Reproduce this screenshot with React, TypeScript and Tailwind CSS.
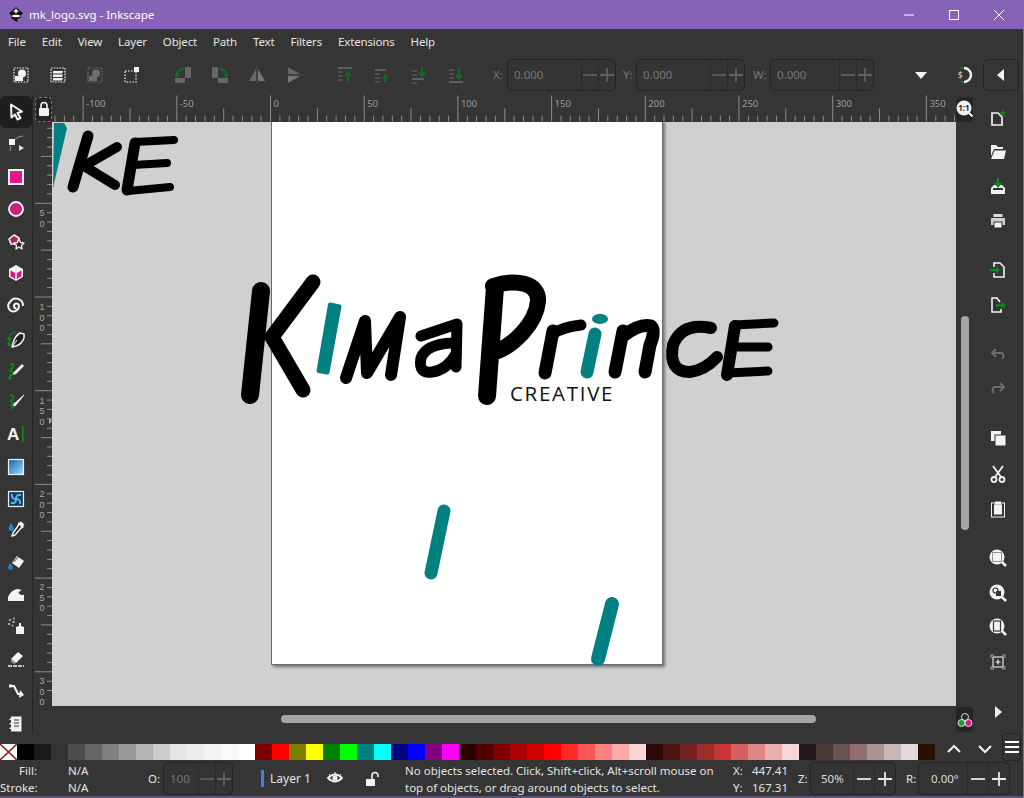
import React from "react";

const W = "#f2f2f2";
const D = "#6e6e6e";
const G = "#0f8a1c";

function Ic({ s = 20, children }: { s?: number; children: React.ReactNode }) {
  return (
    <svg width={s} height={s} viewBox="0 0 20 20" fill="none" className="block shrink-0">
      {children}
    </svg>
  );
}

const leftIcons: { y: number; el: React.ReactNode }[] = [
  { y: 32, el: <Ic><path d="M5 2.5 L16 9.5 L11.5 11 L14.5 16 L11.5 17.5 L9 12.5 L5.5 15.5 Z" fill="#222" stroke={W} strokeWidth="2" strokeLinejoin="round" /></Ic> },
  { y: 32, el: <Ic><rect x="3" y="5" width="6" height="6" fill={W} /><path d="M9 5 Q13 2 17 2" stroke="#999" strokeWidth="1" /><path d="M5 12 L4 17" stroke="#999" strokeWidth="1" /><path d="M13 11 L18 14 L13 17 Z" fill="#ddd" /></Ic> },
  { y: 33, el: <Ic><rect x="3" y="3" width="14" height="14" fill="#f0148c" stroke={W} strokeWidth="2" /></Ic> },
  { y: 32, el: <Ic><circle cx="10" cy="10" r="7" fill="#c6217e" stroke={W} strokeWidth="1.8" /></Ic> },
  { y: 32, el: <Ic><path d="M3 8 L8 4 L13 7 L11 13 L5 13 Z" fill="#b01f70" stroke={W} strokeWidth="1.6" strokeLinejoin="round" /><path d="M13 8 L14.5 11.5 L18 12 L15.5 14.5 L16 18 L13 16 L10 18 L10.5 14.5 L8 12 L11.5 11.5 Z" fill="#35202c" stroke={W} strokeWidth="1.3" strokeLinejoin="round" /></Ic> },
  { y: 32, el: <Ic><path d="M10 2 L17 6 L17 14 L10 18 L3 14 L3 6 Z" fill={W} /><path d="M4.5 7.5 L9.2 10 L9.2 16 L4.5 13.3 Z" fill="#d81b84" /><path d="M15.5 7.5 L10.8 10 L10.8 16 L15.5 13.3 Z" fill="#d81b84" /></Ic> },
  { y: 33, el: <Ic><path d="M10.5 12.5 A2.5 2.5 0 1 1 13 10 A5.5 5.5 0 0 1 7 15.5 A5.5 5.5 0 0 1 4 6 A7 7 0 0 1 17 10" stroke={W} strokeWidth="2" /></Ic> },
  { y: 33, el: <Ic><path d="M3 9 Q4 4 10 3" stroke={G} strokeWidth="1.2" /><rect x="1.5" y="8" width="3" height="3" fill={G} /><rect x="1.5" y="14" width="3" height="3" fill={G} /><path d="M3 11 V14" stroke={G} /><path d="M18 5 L14 4 Q9 7 7 14 L6 18 L10 17 Q16 15 18 9 Z" fill="#222" stroke={W} strokeWidth="1.5" strokeLinejoin="round" /><path d="M6.5 17.5 L11 11" stroke={W} strokeWidth="1" /></Ic> },
  { y: 31, el: <Ic><path d="M4 3 Q10 3 6 7 Q2 10 7 11 Q9 12 5 14 L3 17" stroke={G} strokeWidth="1.8" /><path d="M16 3 L18 5 L10 13 L7 14 L8 11 Z" fill={W} /><circle cx="4" cy="17" r="1.6" fill={G} /></Ic> },
  { y: 32, el: <Ic><path d="M4 3 Q10 4 6 8 Q3 10 8 11 L4 14" stroke={G} strokeWidth="1.6" /><path d="M18 3 L7 13 L9 14 Z" fill={W} stroke={W} /><path d="M7 13 L3 18 L9 15 Z" fill={G} /></Ic> },
  { y: 32, el: <Ic><text x="1" y="16" fontSize="17" fontWeight="700" fill={W} fontFamily="'Liberation Sans',sans-serif">A</text><rect x="16" y="2" width="1.6" height="16" fill={G} /></Ic> },
  { y: 33, el: <Ic><defs><linearGradient id="gr" x1="0" y1="0" x2="1" y2="1"><stop offset="0" stopColor="#0b63b5" /><stop offset="1" stopColor="#a9dcfb" /></linearGradient></defs><rect x="2.5" y="2.5" width="15" height="15" fill="url(#gr)" stroke={W} strokeWidth="1.2" /></Ic> },
  { y: 31, el: <Ic><rect x="2.5" y="2.5" width="15" height="15" fill="#14405f" stroke={W} strokeWidth="1.2" /><path d="M10 10 Q5 10 6 5 M10 10 Q15 10 14 15 M10 10 Q10 15 5 14 M10 10 Q10 5 15 6" stroke="#56c0f5" strokeWidth="1.8" /></Ic> },
  { y: 32, el: <Ic><path d="M13 3 L17 7 L15 8 L9 15 L6 16 L7 13 L12 6 Z" fill="#222" stroke={W} strokeWidth="1.5" strokeLinejoin="round" /><rect x="13" y="2" width="5" height="4" fill={W} transform="rotate(45 15 4)" /><path d="M5 3 Q8 7 8 9 A2.8 2.8 0 0 1 2.5 9 Q2.5 7 5 3 Z" fill="#1e88d8" /></Ic> },
  { y: 33, el: <Ic><path d="M11 3 L18 8 L13 15 L6 10 Z" fill={W} /><path d="M8 9 L12 4" stroke="#444" /><path d="M4 10 Q7 14 7 15 A2.7 2.7 0 0 1 2 15 Q2 13 4 10 Z" fill="#1e88d8" /></Ic> },
  { y: 31, el: <Ic><path d="M2 16 V12 Q5 5 11 4 Q15 3.5 15 6 Q13 6 12.5 8 Q15 11 18 9.5 V16 Z" fill={W} /></Ic> },
  { y: 32, el: <Ic><path d="M10 11 L13 10 V7 H15 V10 L18 11 V18 H10 Z" fill={W} /><circle cx="4" cy="4" r="1.1" fill="#cccccc" /><circle cx="7.5" cy="6" r="1.1" fill="#cccccc" /><circle cx="3" cy="8" r="1.1" fill="#cccccc" /><circle cx="8" cy="2.5" r="1.1" fill="#aaaaaa" /><circle cx="6.5" cy="9.5" r="1.1" fill="#aaaaaa" /></Ic> },
  { y: 33, el: <Ic><path d="M5 10 L12 3 L17 7 L10 14 Z" fill={W} /><path d="M5 10 L10 14 L8 15 L5 13 Z" fill="#999" /><path d="M2 17 H18" stroke={W} strokeWidth="1.3" strokeDasharray="4 1" /></Ic> },
  { y: 32, el: <Ic><path d="M4 5 H8 L12 13 H15" stroke={W} strokeWidth="2.2" /><path d="M14 9 L18 14 L13 17 Z" fill={W} /><rect x="3" y="3.5" width="3" height="3" fill={W} /></Ic> },
  { y: 33, el: <Ic><path d="M5 2.5 H15.5 V17.5 H5 V15 H3.5 V13.5 H5 V10.5 H3.5 V9 H5 V6 H3.5 V4.5 H5 Z" fill={W} /><path d="M8 6 H13 M8 9 H13 M8 12 H13" stroke="#333" strokeWidth="1.2" /></Ic> },
];

function Sel({ children, c = W }: { children?: React.ReactNode; c?: string }) {
  return (
    <Ic>
      <rect x="3" y="3" width="14" height="14" stroke={c} strokeWidth="1.2" strokeDasharray="1.6 1.2" />
      {children}
    </Ic>
  );
}

const topIcons: React.ReactNode[][] = [
  [
    <Sel><circle cx="11" cy="8.5" r="4" fill={W} /><rect x="4" y="11" width="8" height="5" fill={W} /></Sel>,
    <Sel><path d="M5 6 H15 L14 8.5 H5 Z M5 9.5 H15 L14 12 H5 Z M5 13 H15 L14 15.5 H5 Z" fill={W} /></Sel>,
    <Sel c={D}><circle cx="11" cy="8.5" r="4" fill={D} /><rect x="4" y="11" width="8" height="5" fill={D} /></Sel>,
    <Ic><rect x="3" y="6" width="11" height="11" stroke={W} strokeWidth="1.2" strokeDasharray="1.6 1.4" /><rect x="12" y="2" width="5" height="5" fill={W} /></Ic>,
  ],
  [
    <Ic><rect x="2" y="13" width="10" height="5" fill="#666" /><rect x="12" y="2" width="6" height="11" fill="#666" /><path d="M4 11 A6 6 0 0 1 11 4" stroke="#176b20" strokeWidth="2.2" /><path d="M1.5 9 L6.5 9 L4 13 Z" fill="#176b20" /></Ic>,
    <Ic><rect x="8" y="13" width="10" height="5" fill="#666" /><rect x="2" y="2" width="6" height="11" fill="#666" /><path d="M16 11 A6 6 0 0 0 9 4" stroke="#176b20" strokeWidth="2.2" /><path d="M18.5 9 L13.5 9 L16 13 Z" fill="#176b20" /></Ic>,
    <Ic><path d="M9 4 V16 H2 Z" fill="#666" /><path d="M11 4 V16 H18 Z" fill="#777" /><path d="M10 1 V19" stroke="#555" strokeDasharray="2 1" /></Ic>,
    <Ic><path d="M4 2 L16 9 H4 Z" fill="#666" /><path d="M4 11 H16 L4 18 Z" fill="#777" /><path d="M1 10 H19" stroke="#555" strokeDasharray="2 1" /></Ic>,
  ],
  [
    <Ic><path d="M3 3 H17" stroke="#6a6a6a" strokeWidth="1.6" /><path d="M3 7 H8 M3 11 H8 M3 15 H8" stroke="#5a5a5a" strokeWidth="1.6" /><path d="M13 18 V8 M10 11 L13 7 L16 11" stroke="#176b20" strokeWidth="1.8" /></Ic>,
    <Ic><path d="M3 5 H14" stroke="#6a6a6a" strokeWidth="1.6" /><path d="M3 9 H8 M3 13 H8 M3 17 H8" stroke="#5a5a5a" strokeWidth="1.6" /><path d="M13 18 V11 M10 14 L13 10 L16 14" stroke="#176b20" strokeWidth="1.8" /></Ic>,
    <Ic><path d="M3 14 H15" stroke="#6a6a6a" strokeWidth="1.6" /><path d="M3 6 H8 M3 10 H8 M3 18 H8" stroke="#5a5a5a" strokeWidth="1.6" /><path d="M13 2 V10 M10 7 L13 11 L16 7" stroke="#176b20" strokeWidth="1.8" /></Ic>,
    <Ic><path d="M3 17 H17" stroke="#6a6a6a" strokeWidth="1.6" /><path d="M3 5 H8 M3 9 H8 M3 13 H8" stroke="#5a5a5a" strokeWidth="1.6" /><path d="M13 2 V13 M10 10 L13 14 L16 10" stroke="#176b20" strokeWidth="1.8" /></Ic>,
  ],
];

function Mag({ children }: { children?: React.ReactNode }) {
  return (
    <Ic>
      <circle cx="9" cy="9" r="7.5" fill={W} />
      <path d="M14 14 L18 18" stroke={W} strokeWidth="2.5" />
      {children}
    </Ic>
  );
}

const rightIcons: { y: number; el: React.ReactNode }[] = [
  { y: 118, el: <Ic><path d="M4 5 H10 L14 9 V17 H4 Z" stroke={W} strokeWidth="1.7" fill="#333" /><path d="M15 1 L16 4 L19 5 L16 6 L15 9 L14 6 L11 5 L14 4 Z" fill={G} /></Ic> },
  { y: 152, el: <Ic><path d="M3 3 H8 L10 5 H15 V7 H6 L3 14 Z" fill={W} /><path d="M6.5 8.5 H18 L16 17 H3 Z" fill={W} /></Ic> },
  { y: 187, el: <Ic><path d="M3 11 L6 8 H14 L17 11 V17 H3 Z" fill={W} /><rect x="5" y="11" width="10" height="2" fill="#333" /><path d="M10 1 V9" stroke={G} strokeWidth="2.4" /><path d="M6 6 H14 L10 11 Z" fill={G} /></Ic> },
  { y: 221, el: <Ic><rect x="5.5" y="3" width="9" height="3" fill="#ddd" /><path d="M3 7 H17 V14 H3 Z" fill="#cfcfcf" /><rect x="6" y="11" width="8" height="6" fill={W} stroke="#333" /></Ic> },
  { y: 270, el: <Ic><path d="M6 7 V3 H12 L16 7 V17 H6 V13" stroke={W} strokeWidth="1.6" /><path d="M2 10 H9" stroke={G} strokeWidth="2.4" /><path d="M8 6.5 L12 10 L8 13.5 Z" fill={G} /></Ic> },
  { y: 305, el: <Ic><path d="M12 7 L9 3 H4 V17 H13 V14" stroke={W} strokeWidth="1.6" /><path d="M8 10.5 H15" stroke={G} strokeWidth="2.4" /><path d="M14 7 L18 10.5 L14 14 Z" fill={G} /></Ic> },
  { y: 355, el: <Ic><path d="M14 14 Q17 11 14 8 H6" stroke={D} strokeWidth="2" /><path d="M8 4 L4 8 L8 12" stroke={D} strokeWidth="2" /></Ic> },
  { y: 389, el: <Ic><path d="M6 14 Q3 11 6 8 H14" stroke={D} strokeWidth="2" /><path d="M12 4 L16 8 L12 12" stroke={D} strokeWidth="2" /></Ic> },
  { y: 438, el: <Ic><rect x="3" y="3" width="10" height="10" fill={W} /><rect x="7" y="7" width="11" height="11" fill={W} stroke="#333" /></Ic> },
  { y: 474, el: <Ic><path d="M5 2 L13 13 M15 2 L7 13" stroke={W} strokeWidth="1.8" /><circle cx="6" cy="15.5" r="2.5" stroke={W} strokeWidth="1.8" /><circle cx="14" cy="15.5" r="2.5" stroke={W} strokeWidth="1.8" /></Ic> },
  { y: 509, el: <Ic><rect x="3.5" y="4" width="13" height="14" stroke={W} strokeWidth="1" /><rect x="6" y="5.5" width="8" height="10" fill={W} /><rect x="7" y="2.5" width="6" height="3" fill={W} /></Ic> },
  { y: 558, el: <Mag><rect x="4.5" y="4.5" width="9" height="9" stroke="#333" strokeDasharray="1 1" /></Mag> },
  { y: 593, el: <Mag><circle cx="7.5" cy="7.5" r="2.5" stroke="#333" strokeWidth="1.2" /><rect x="8" y="8" width="5" height="5" fill="#333" /></Mag> },
  { y: 627, el: <Mag><rect x="5.5" y="4" width="7" height="10" fill={W} stroke="#333" strokeWidth="1.2" /></Mag> },
  { y: 662, el: <Ic><path d="M6 3 H3 V6 M14 3 H17 V6 M6 17 H3 V14 M14 17 H17 V14" stroke="#aaa" strokeWidth="1" /><rect x="5" y="5" width="10" height="10" stroke={W} strokeWidth="1.1" /><path d="M7.5 10 H12.5 M10 7.5 V12.5" stroke={W} strokeWidth="1.2" /></Ic> },
  { y: 712, el: <Ic><path d="M7 4 L14 10 L7 16 Z" fill={W} /></Ic> },
];

const swatches = [
  "#000000","#1a1a1a","#333333","#4d4d4d","#666666","#808080","#999999","#b3b3b3","#cccccc","#e6e6e6","#ececec","#f2f2f2","#f9f9f9","#ffffff",
  "#800000","#ff0000","#808000","#ffff00","#008000","#00ff00","#008080","#00ffff","#000080","#0000ff","#800080","#ff00ff",
  "#2b0000","#550000","#800000","#aa0000","#d40000","#ff0000","#ff2a2a","#ff5555","#ff8080","#ffaaaa","#ffd5d5",
  "#280b0b","#501616","#782121","#a02c2c","#c83737","#d35f5f","#de8787","#e9afaf","#f4d7d7",
  "#241c1c","#483737","#6c5353","#916f6f","#ac9393","#c8b7b7","#e3dbdb","#2b1100",
];

function Spin({ w, value, btn = 17, bright = false, text = 6 }: { w: string; value: string; btn?: number; bright?: boolean; text?: number }) {
  const c = bright ? "#e8e8e8" : "#5f5f5f";
  return (
    <div className={`${w} flex h-full shrink-0 items-stretch rounded-[5px] border border-[#242424] bg-[#343434]`}>
      <div
        className={`flex flex-1 items-center ${bright ? "text-[#dcdcdc]" : "text-[#777777]"}`}
        style={{ paddingLeft: text }}
      >
        {value}
      </div>
      {[0, 1].map((i) => (
        <div key={i} className="flex items-center justify-center border-l border-[#2a2a2a]" style={{ width: btn }}>
          <svg width="16" height="16" viewBox="0 0 16 16">
            <path d={i === 0 ? "M1 8 H15" : "M1 8 H15 M8 1 V15"} stroke={c} strokeWidth="1.8" />
          </svg>
        </div>
      ))}
    </div>
  );
}

function HRuler() {
  const ticks = [];
  for (let i = -23; i < 74; i++) {
    const x = 218.5 + i * 9.37;
    const m = ((i % 10) + 10) % 10;
    const h = m === 0 ? 26 : m === 5 ? 13 : 6;
    ticks.push(<path key={i} d={`M${x.toFixed(1)} 26.5 V${26.5 - h}`} stroke="#8c8c8c" strokeWidth="1" />);
  }
  const labels = [-100, -50, 0, 50, 100, 150, 200, 250, 300, 350];
  return (
    <svg width="904" height="27" className="block shrink-0">
      {ticks}
      {labels.map((l) => (
        <text key={l} x={218.5 + (l / 10) * 18.74 + 3} y="12" fontSize="9.5" fill="#9c9c9c" fontFamily="'Noto Sans',sans-serif">
          {l}
        </text>
      ))}
    </svg>
  );
}

function VRuler() {
  const ticks = [];
  for (let i = 0; i < 63; i++) {
    const y = -12.4 + i * 9.37;
    const m = i % 10;
    if (y < 0) continue;
    const x = m === 0 ? 2 : m === 5 ? 8 : 14;
    ticks.push(<path key={i} d={`M${x} ${y.toFixed(1)} H19`} stroke="#8c8c8c" strokeWidth="1" />);
  }
  const rows = [
    { y: 81, d: ["5", "0"] },
    { y: 175, d: ["1", "0", "0"] },
    { y: 268.5, d: ["1", "5", "0"] },
    { y: 362, d: ["2", "0", "0"] },
    { y: 455, d: ["2", "5", "0"] },
    { y: 549, d: ["3", "0", "0"] },
  ];
  return (
    <svg width="19" height="584" className="block shrink-0 overflow-visible">
      {ticks}
      {rows.map((r) =>
        r.d.map((c, i) => (
          <text key={r.y + "-" + i} x="6.5" y={r.y + 13 + i * 10.5} fontSize="9" fill="#a8a8a8" fontFamily="'Liberation Sans',sans-serif">
            {c}
          </text>
        )),
      )}
      <path d="M16 296 L19 299 L16 302 Z" fill="#aaaaaa" />
    </svg>
  );
}

function Logo() {
  const k = { stroke: "#000", fill: "none", strokeLinecap: "round" as const, strokeLinejoin: "round" as const };
  const teal = { ...k, stroke: "#008080" };
  return (
    <svg viewBox="52 122 904 584" width="904" height="584" className="absolute left-0 top-0">
      <polygon points="54,123 64,123 67,128 53,188" fill="#008080" />
      <g {...k}>
        <path d="M88 136 L73 187" strokeWidth="11" />
        <path d="M117 147 L84 166 L115 185" strokeWidth="10" />
        <path d="M135 143 L127 190" strokeWidth="11" />
        <path d="M135 142 L174 140 M133 165 L167 163 M128 191 L170 187" strokeWidth="8" />

        <path d="M261 291 L250 395" strokeWidth="18" />
        <path d="M313 282 L272 337" strokeWidth="15" />
        <path d="M272 337 L303 390" strokeWidth="15" />

        <path d="M346 378 L365 321 L367 373 L400 317 L391 375" strokeWidth="12" />
        <path d="M421 336 L457 324 L456 367" strokeWidth="11" />
        <path d="M453 343 Q426 344 421 358 Q418 374 432 372 Q447 370 456 354" strokeWidth="11" />

        <path d="M495 287 L487 396" strokeWidth="18" />
        <path d="M493 286 C515 279 539 282 538 301 C536 325 512 345 498 351" strokeWidth="16" />
        <path d="M545 373 L553 331" strokeWidth="13" />
        <path d="M553 334 Q562 327 581 325" strokeWidth="11" />
        <path d="M615 372 L623 331" strokeWidth="13" />
        <path d="M623 336 Q640 323 651 326 Q656 330 650 345 L645 372" strokeWidth="13" />
        <path d="M711 328 Q682 322 673 345 Q668 372 690 372 Q705 370 717 357" strokeWidth="12" />
        <path d="M735 326 L727 375" strokeWidth="12" />
        <path d="M734 325 L774 323 M733 347 L768 347 M728 373 L768 371" strokeWidth="9" />
      </g>
      <polygon points="330,304.5 339.5,306.5 327.5,372.5 318.5,371" fill="#008080" stroke="#008080" strokeWidth="4" strokeLinejoin="round" />
      <path d="M587 372 L595 334" {...teal} strokeWidth="13" />
      <ellipse cx="600" cy="319" rx="8" ry="5" fill="#008080" />
      <path d="M444 511 L431 573" {...teal} strokeWidth="13" />
      <path d="M612 604 L598 659" {...teal} strokeWidth="14" />
      <text x="510" y="401" fontSize="20.5" letterSpacing="1.7" fill="#111" fontFamily="'Open Sans',sans-serif">
        CREATIVE
      </text>
    </svg>
  );
}

export default function App() {
  return (
    <div className="flex h-[798px] w-[1024px] flex-col overflow-hidden border-r border-[#8763b8] bg-[#353535] font-['Noto_Sans',sans-serif] text-[11.5px] text-[#e4e4e4]">
      {/* Title bar */}
      <div className="flex h-[29px] shrink-0 items-center bg-[#8763b8] pl-[8px] pr-[2px] text-white">
        <svg width="16" height="16" viewBox="0 0 16 16" className="shrink-0">
          <path d="M8 0 L15 6.5 L12 9 L13 11 L10 11.5 L9 15 L6 13 L3 11 L4 9 L1 6.5 Z" fill="#111" />
          <path d="M8 1.5 L11 5 L9.5 4.5 L8 6.5 L6.5 4.5 L5 5 Z" fill="#fff" />
          <ellipse cx="8" cy="9" rx="4" ry="1.2" fill="#fff" />
        </svg>
        <span className="ml-[5px]">mk_logo.svg - Inkscape</span>
        <div className="ml-auto flex">
          {[
            <path d="M0 5 H10" stroke="#fff" strokeWidth="1" />,
            <rect x="0.5" y="0.5" width="9" height="9" stroke="#fff" fill="none" />,
            <path d="M0 0 L10 10 M10 0 L0 10" stroke="#fff" strokeWidth="1" />,
          ].map((p, i) => (
            <div key={i} className="flex h-[27px] w-[45px] items-center justify-center">
              <svg width="10" height="10" viewBox="0 0 10 10" className="overflow-visible">
                {p}
              </svg>
            </div>
          ))}
        </div>
      </div>

      {/* Menu */}
      <div className="flex h-[27px] shrink-0 items-center pb-[2px] tracking-[-0.17px]">
        {["File", "Edit", "View", "Layer", "Object", "Path", "Text", "Filters", "Extensions", "Help"].map((m) => (
          <span key={m} className="px-[8px]">
            {m}
          </span>
        ))}
      </div>

      {/* Tool controls */}
      <div className="flex h-[39px] shrink-0 items-center pb-[1px] pl-[2px]">
        {topIcons.map((g, gi) => (
          <div key={gi} className={`flex ${gi > 0 ? "ml-[14px]" : ""}`}>
            {g.map((ic, i) => (
              <div key={i} className="flex w-[37px] justify-center">
                {ic}
              </div>
            ))}
          </div>
        ))}
        <div className="flex h-[32px] items-center">
          <span className="ml-[19px] w-[14px] text-[#777777]">X:</span>
          <Spin w="w-[109px]" value="0.000" />
          <span className="ml-[7px] w-[13px] text-[#777777]">Y:</span>
          <Spin w="w-[109px]" value="0.000" />
          <span className="ml-[8px] w-[17px] text-[#777777]">W:</span>
          <Spin w="w-[104px]" value="0.000" />
          <div className="ml-[40px] flex w-[14px] justify-center">
            <svg width="14" height="8" viewBox="0 0 14 8">
              <path d="M1 1 H13 L7 8 Z" fill={W} />
            </svg>
          </div>
          <div className="ml-[26px]">
            <Ic>
              <path d="M10 3 A7 7 0 0 1 10 17" stroke={W} strokeWidth="2.4" />
              <path d="M7 3.5 L9 3 M7 16.5 L9 17" stroke={G} strokeWidth="2" />
              <text x="4" y="13" fontSize="8" fill="#ddd" fontFamily="'Noto Sans',sans-serif">$</text>
            </Ic>
          </div>
          <div className="ml-[9px] flex h-[32px] w-[36px] items-center justify-center rounded-[5px] border border-[#242424]">
            <svg width="8" height="12" viewBox="0 0 8 12">
              <path d="M7 0 V12 L0 6 Z" fill={W} />
            </svg>
          </div>
        </div>
      </div>

      {/* Workspace */}
      <div className="flex h-[638px] shrink-0">
        <div className="relative w-[33px] shrink-0 border-r border-[#252525]">
          <div className="mt-[1px] flex w-[32px] flex-col items-center">
            {leftIcons.map((ic, i) => (
              <div
                key={i}
                className={`flex w-full items-center justify-center ${i === 0 ? "rounded-[6px] bg-[#1e1e1e]" : ""}`}
                style={{ height: ic.y }}
              >
                {ic.el}
              </div>
            ))}
          </div>
        </div>

        <div className="flex w-[940px] shrink-0 flex-col">
          <div className="flex h-[27px] shrink-0">
            <div className="flex w-[19px] shrink-0 items-center justify-end pt-[1px]">
              <div className="flex h-[25px] w-[17px] items-center justify-center rounded-[4px] border border-dashed border-[#777777] bg-[#252525]">
                <svg width="12" height="16" viewBox="0 0 12 16">
                  <path d="M3 7 V4.5 A3 3 0 0 1 9 4.5 V7" stroke={W} strokeWidth="1.6" fill="none" />
                  <rect x="1" y="7" width="10" height="8" rx="1" fill={W} />
                </svg>
              </div>
            </div>
            <HRuler />
            <div className="flex w-[17px] shrink-0 items-center justify-center pt-[1px]">
              <div className="relative flex h-[25px] w-[17px] items-center justify-center rounded-[4px] bg-[#252525]">
                <svg width="17" height="17" viewBox="0 0 17 17" className="absolute left-0 top-[3px]">
                  <circle cx="8" cy="8" r="7.5" fill={W} />
                  <path d="M13 13 L16.5 16.5" stroke={W} strokeWidth="2" />
                </svg>
                <span className="relative mt-[-3px] ml-[-1px] text-[8px] font-bold leading-none text-[#222222]">1:1</span>
              </div>
            </div>
          </div>
          <div className="flex h-[584px] shrink-0">
            <VRuler />
            <div className="relative h-[584px] w-[904px] shrink-0 overflow-hidden bg-[#d0d0d0]">
              <div className="absolute left-[219px] top-[-2px] h-[545px] w-[392px] border border-[#6b6b6b] bg-white shadow-[2px_2px_3px_rgba(0,0,0,0.45)]" />
              <Logo />
            </div>
            <div className="w-[17px] shrink-0 pl-[5px] pt-[194px]">
              <div className="h-[214px] w-[8px] rounded-full bg-[#a5a5a5]" />
            </div>
          </div>
          <div className="flex h-[27px] shrink-0">
            <div className="w-[19px] shrink-0" />
            <div className="flex w-[904px] shrink-0 items-start pl-[229px] pt-[9px]">
              <div className="h-[8px] w-[535px] rounded-full bg-[#a5a5a5]" />
            </div>
            <div className="flex h-[25px] w-[17px] shrink-0 items-center justify-center self-center rounded-[4px] bg-[#252525]">
              <svg width="16" height="18" viewBox="0 0 16 18">
                <circle cx="8" cy="6" r="3.5" fill="none" stroke="#dddddd" strokeWidth="1" />
                <circle cx="4.5" cy="12" r="3.5" fill="#17a03c" stroke="#dddddd" strokeWidth="1" />
                <circle cx="11.5" cy="12" r="3.5" fill="#d0218a" stroke="#dddddd" strokeWidth="1" />
              </svg>
            </div>
          </div>
        </div>

        <div className="relative w-[50px] shrink-0">
          <div className="flex h-full flex-col">
            {rightIcons.map((ic, i) => {
              const prev = i === 0 ? 95 : rightIcons[i - 1].y + 10;
              return (
                <div key={i} className="flex justify-center" style={{ marginTop: ic.y - 10 - prev }}>
                  {ic.el}
                </div>
              );
            })}
          </div>
        </div>
      </div>

      {/* Palette */}
      <div className="flex h-[27px] shrink-0 items-start">
        <div className="mt-[11px] flex h-[16px] shrink-0">
          <svg width="17" height="16" viewBox="0 0 17 16" className="block shrink-0">
            <rect width="17" height="16" fill="#fff" />
            <path d="M0 0 L17 16 M17 0 L0 16" stroke="#8a1a1a" strokeWidth="1.5" />
          </svg>
          {swatches.map((c, i) => (
            <div key={i} className="h-[16px] w-[17px] shrink-0" style={{ backgroundColor: c }} />
          ))}
        </div>
        <div className="ml-[3px] mt-[11px] flex">
          {["M2 8 L8 2 L14 8", "M2 2 L8 8 L14 2"].map((d) => (
            <div key={d} className="flex w-[31px] justify-center">
              <svg width="16" height="10" viewBox="0 0 16 10">
                <path d={d} stroke={W} strokeWidth="2" fill="none" />
              </svg>
            </div>
          ))}
        </div>
        <div className="ml-[2px] flex h-[28px] w-[19px] flex-col items-center justify-center gap-[3px] rounded-[4px] border border-[#242424]">
          <div className="h-[2px] w-[14px] bg-white" />
          <div className="h-[2px] w-[14px] bg-white" />
          <div className="h-[2px] w-[14px] bg-white" />
        </div>
      </div>

      {/* Status */}
      <div className="flex h-[36px] shrink-0 items-center pt-[1px] leading-[17px]">
        <div className="w-[37px] shrink-0 text-right">
          <div>Fill:</div>
          <div>Stroke:</div>
        </div>
        <div className="ml-[31px] w-[80px] shrink-0">
          <div>N/A</div>
          <div>N/A</div>
        </div>
        <span className="w-[15px] shrink-0">O:</span>
        <div className="h-[33px]">
          <Spin w="w-[70px]" value="100" />
        </div>
        <div className="ml-[28px] h-[17px] w-[3px] shrink-0 bg-[#3f7fe0]" />
        <span className="ml-[6px] w-[57px] shrink-0 text-[12px]">Layer 1</span>
        <svg width="16" height="14" viewBox="0 0 16 14" className="shrink-0">
          <path d="M1 6 Q8 -1 15 6 Q8 13 1 6 Z" fill="none" stroke={W} strokeWidth="1.8" />
          <circle cx="8" cy="6" r="2.6" fill={W} />
          <path d="M2 2 L3.5 3.8 M8 0 V2 M14 2 L12.5 3.8" stroke={W} strokeWidth="1" />
        </svg>
        <svg width="16" height="16" viewBox="0 0 16 16" className="ml-[21px] shrink-0">
          <path d="M8 8 V4.5 A3 3 0 0 1 14 4.5 V6" stroke={W} strokeWidth="1.6" fill="none" />
          <rect x="2" y="8" width="9" height="7" fill={W} />
        </svg>
        <div className="ml-[25px] w-[328px] shrink-0 whitespace-nowrap">
          <div>No objects selected. Click, Shift+click, Alt+scroll mouse on</div>
          <div>top of objects, or drag around objects to select.</div>
        </div>
        <div className="flex w-[55px] shrink-0 justify-between">
          <div>
            <div>X:</div>
            <div>Y:</div>
          </div>
          <div className="text-right">
            <div>447.41</div>
            <div>167.31</div>
          </div>
        </div>
        <span className="ml-[10px] w-[12px] shrink-0">Z:</span>
        <div className="h-[33px]">
          <Spin w="w-[86px]" value="50%" btn={21} bright text={10} />
        </div>
        <span className="ml-[10px] w-[12px] shrink-0">R:</span>
        <div className="h-[33px]">
          <Spin w="w-[92px]" value="0.00°" btn={21} bright text={12} />
        </div>
      </div>
      <div className="h-[2px] shrink-0 bg-[#5d5379]" />
    </div>
  );
}
